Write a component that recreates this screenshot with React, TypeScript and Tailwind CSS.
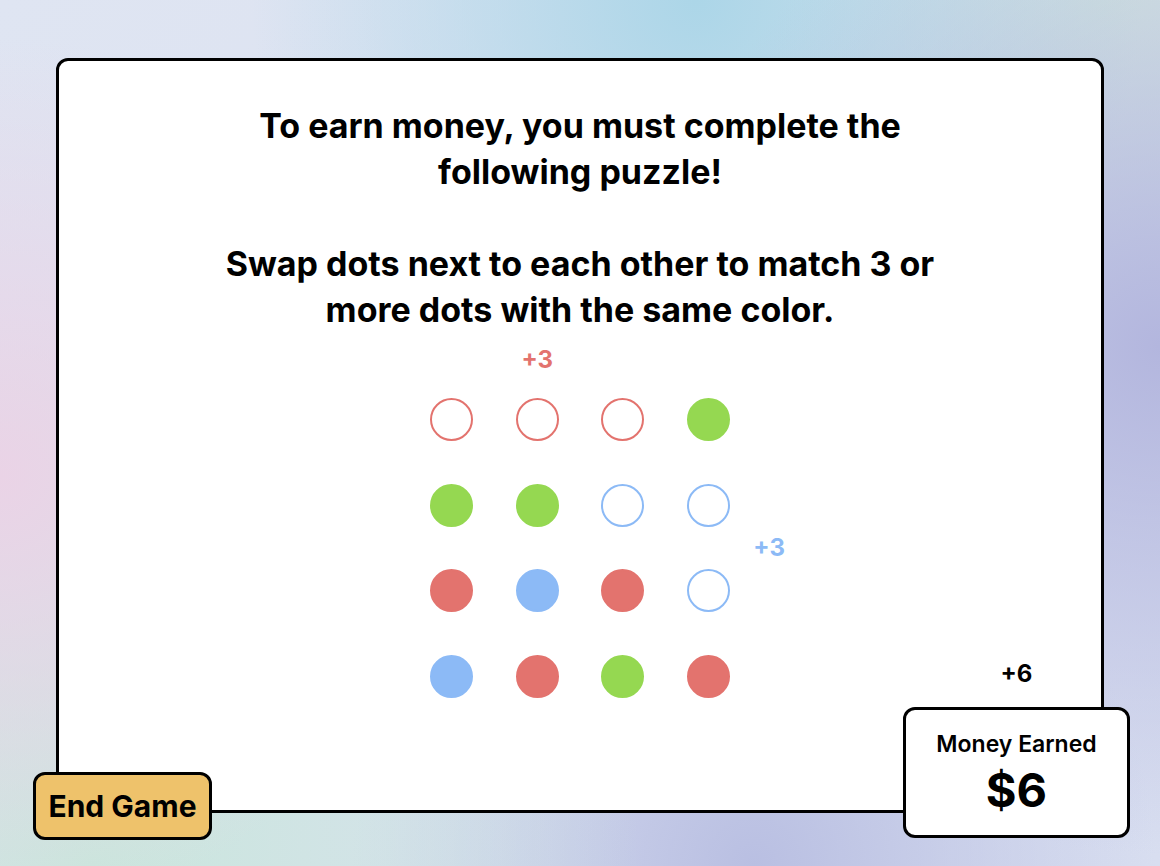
const RED = "#e3736e";
const GREEN = "#95d851";
const BLUE = "#8cbaf6";

type Dot = { color: string; cleared?: boolean };

const board: Dot[][] = [
  [
    { color: RED, cleared: true },
    { color: RED, cleared: true },
    { color: RED, cleared: true },
    { color: GREEN },
  ],
  [{ color: GREEN }, { color: GREEN }, { color: BLUE, cleared: true }, { color: BLUE, cleared: true }],
  [{ color: RED }, { color: BLUE }, { color: RED }, { color: BLUE, cleared: true }],
  [{ color: BLUE }, { color: RED }, { color: GREEN }, { color: RED }],
];

const DotCell = ({ dot }: { dot: Dot }) => (
  <div
    className="h-[43px] w-[43px] rounded-full border-2"
    style={{
      borderColor: dot.color,
      backgroundColor: dot.cleared ? "transparent" : dot.color,
    }}
  />
);

const App = () => {
  return (
    <div
      className="min-h-[866px] w-full pt-[58px] pb-[53px] px-[56px] bg-[radial-gradient(circle_at_0%_55%,#ead3e6_0%,transparent_35%),radial-gradient(circle_at_100%_40%,#b3b6de_0%,transparent_40%),radial-gradient(circle_at_60%_0%,#acd6e8_0%,transparent_40%),radial-gradient(circle_at_95%_0%,#d3e8df_0%,transparent_30%),radial-gradient(circle_at_8%_100%,#c9e6dc_0%,transparent_40%),radial-gradient(circle_at_65%_100%,#b9bfe2_0%,transparent_35%),linear-gradient(135deg,#dfe5f2,#d8def0)]"
      style={{ fontFamily: "Inter, 'Noto Sans', sans-serif" }}
    >
      <div className="relative h-[755px] rounded-[12px] border-[3px] border-black bg-white">
        <div className="mx-auto mt-[42px] max-w-[740px] text-center text-[34px] font-bold leading-[46px] text-black">
          <p>To earn money, you must complete the following puzzle!</p>
          <p className="mt-[46px]">Swap dots next to each other to match 3 or more dots with the same color.</p>
        </div>

        <div className="relative mx-auto mt-[65px] grid w-fit grid-cols-4 gap-[42.5px]">
          {board.flat().map((dot, i) => (
            <DotCell key={i} dot={dot} />
          ))}
          <span className="absolute left-[85.5px] top-[-54px] w-[43px] text-center text-[24px] font-bold leading-[32px] text-[#e3736e]">
            +3
          </span>
          <span className="absolute left-[323px] top-[134px] text-[24px] font-bold leading-[32px] text-[#8cbaf6]">
            +3
          </span>
        </div>

        <button className="absolute left-[-26px] bottom-[-30px] flex h-[68px] w-[179px] items-center justify-center rounded-[12px] border-[3px] border-black bg-[#eec26b] text-[30px] font-bold text-black">
          End Game
        </button>

        <div className="absolute right-[-29px] bottom-[-28px] flex flex-col items-center gap-[17px]">
          <span className="text-[24px] font-bold leading-[32px] text-black">+6</span>
          <div className="flex h-[131px] w-[227px] flex-col items-center rounded-[12px] border-[3px] border-black bg-white pt-[19px]">
            <span className="text-[23px] font-semibold leading-[30px] text-black">Money Earned</span>
            <span className="mt-[3px] text-[47px] font-bold leading-[56px] text-black">$6</span>
          </div>
        </div>
      </div>
    </div>
  );
};

export default App;
